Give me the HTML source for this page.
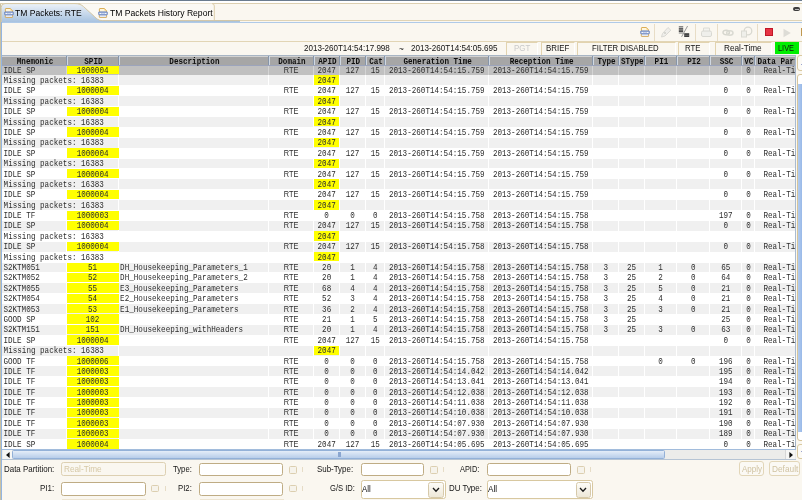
<!DOCTYPE html><html><head><meta charset="utf-8"><style>
*{margin:0;padding:0;box-sizing:border-box}
html,body{width:802px;height:500px;overflow:hidden;background:#faf7f0}
body{filter:blur(0.35px)}
body{position:relative;font-family:"Liberation Sans",sans-serif;color:#222}
.a{position:absolute}
.t{position:absolute;white-space:nowrap;transform-origin:0 0}
.ht{position:absolute;top:0;height:10px;font:bold 7.6px/13px "Liberation Mono",monospace;color:#0e0e0e;text-align:center;white-space:nowrap;transform:scaleY(1.08);transform-origin:0 8.6px}
.r{position:absolute;left:0;width:802px}
.c{position:absolute;top:0;height:10.39px;font:7.6px/13.4px "Liberation Mono",monospace;color:#2c2c2c;white-space:nowrap;clip-path:inset(-4px 0 -4px 0);transform:scaleY(1.13);transform-origin:0 8px}
.s{font-family:"Liberation Sans",sans-serif}
.vc{margin-left:0.6px}
.fld{position:absolute;border:1px solid #bfac84;border-radius:2.5px;background:#fff}
.chk{position:absolute;width:8px;height:7.5px;border:1px solid #dccfb0;border-radius:1.5px;background:#f6f3eb}
.ex{position:absolute;width:1px;height:5px;background:#e6dcc6}
</style></head><body>

<div class="a" style="left:0;top:0;width:802px;height:1px;background:#6a7b8e"></div>
<div class="a" style="left:0;top:1px;width:802px;height:2px;background:#fff"></div>
<div class="a" style="left:0;top:3px;width:802px;height:1px;background:#dccfb0"></div>
<div class="a" style="left:0;top:20.3px;width:802px;height:1px;background:#e0d3b4"></div>
<svg class="a" style="left:0;top:0" width="240" height="24" viewBox="0 0 240 24">
<defs><linearGradient id="tg" x1="0" y1="0" x2="0" y2="1"><stop offset="0" stop-color="#edf2f8"/><stop offset="1" stop-color="#a5c1df"/></linearGradient></defs>
<path d="M80,3.6 L212,3.6 Q214.3,3.6 214.3,6 L214.3,20.6 L100,20.6 Z" fill="#fbf9f4"/>
<path d="M214.3,20.6 L214.3,6 Q214.3,3.6 212,3.6" fill="none" stroke="#d8c8a2" stroke-width="0.9"/>
<path d="M1.2,22.6 L1.2,7.5 Q1.2,3.6 5,3.6 L75,3.6 C79,3.6 81.5,4.8 83.5,6.6 L94.5,16.6 C96.5,18.6 98.5,20.6 102.5,20.6 L240,20.6 L240,22.6 Z" fill="url(#tg)"/>
<path d="M1.2,22.6 L1.2,7.5 Q1.2,3.6 5,3.6 L75,3.6 C79,3.6 81.5,4.8 83.5,6.6 L94.5,16.6 C96.5,18.6 98.5,20.6 102.5,20.6 L240,20.6" fill="none" stroke="#d4c49e" stroke-width="0.9"/>
</svg>
<div class="a" style="left:0;top:21.5px;width:802px;height:1.1px;background:#afcae8"></div>
<div class="a" style="left:0;top:4px;width:1px;height:496px;background:#c9c1a3"></div>
<div class="a" style="left:1px;top:21.5px;width:1.4px;height:479px;background:#93b5e2"></div>
<svg class="a" style="left:3.6px;top:7.5px" width="10" height="10" viewBox="0 0 10 10">
<path d="M1.4,4 L1.4,1.1 Q1.4,0.5 2,0.5 L6.3,0.5 L8.6,2.7 L8.6,4" fill="#fff6dc" stroke="#d6a648" stroke-width="0.9"/>
<path d="M6.2,0.6 L6.6,2.6 L8.5,2.8" fill="#f2c870" stroke="none"/>
<path d="M1.3,6.8 L1.3,9.1 Q1.3,9.5 1.8,9.5 L8.2,9.5 Q8.6,9.5 8.6,9.1 L8.6,6.8" fill="#e6ebf4" stroke="#d2a24c" stroke-width="0.8"/>
<rect x="0.45" y="3.8" width="9.1" height="3.2" rx="1.2" fill="#97abd6" stroke="#5a76b6" stroke-width="0.6"/>
<rect x="1.5" y="5" width="1.8" height="0.9" fill="#fff"/><rect x="6.7" y="5" width="1.8" height="0.9" fill="#fff"/><rect x="3.6" y="5.1" width="2.8" height="0.7" fill="#dfe7f6"/>
</svg>
<svg class="a" style="left:98px;top:7.5px" width="10" height="10" viewBox="0 0 10 10">
<path d="M1.4,4 L1.4,1.1 Q1.4,0.5 2,0.5 L6.3,0.5 L8.6,2.7 L8.6,4" fill="#fff6dc" stroke="#d6a648" stroke-width="0.9"/>
<path d="M6.2,0.6 L6.6,2.6 L8.5,2.8" fill="#f2c870" stroke="none"/>
<path d="M1.3,6.8 L1.3,9.1 Q1.3,9.5 1.8,9.5 L8.2,9.5 Q8.6,9.5 8.6,9.1 L8.6,6.8" fill="#e6ebf4" stroke="#d2a24c" stroke-width="0.8"/>
<rect x="0.45" y="3.8" width="9.1" height="3.2" rx="1.2" fill="#97abd6" stroke="#5a76b6" stroke-width="0.6"/>
<rect x="1.5" y="5" width="1.8" height="0.9" fill="#fff"/><rect x="6.7" y="5" width="1.8" height="0.9" fill="#fff"/><rect x="3.6" y="5.1" width="2.8" height="0.7" fill="#dfe7f6"/>
</svg>
<div class="a" style="left:792.8px;top:7.2px;width:7.6px;height:3.8px;border-radius:2px;background:#3e3e3e"></div>
<div class="a" style="left:794.6px;top:8.7px;width:4px;height:0.9px;background:#bbb"></div>
<div class="a" style="left:2px;top:40.8px;width:800px;height:1px;background:#e2d5b5"></div>
<svg class="a" style="left:639.8px;top:27px" width="10" height="10" viewBox="0 0 10 10">
<path d="M1.4,4 L1.4,1.1 Q1.4,0.5 2,0.5 L6.3,0.5 L8.6,2.7 L8.6,4" fill="#fff6dc" stroke="#d6a648" stroke-width="0.9"/>
<path d="M6.2,0.6 L6.6,2.6 L8.5,2.8" fill="#f2c870" stroke="none"/>
<path d="M1.3,6.8 L1.3,9.1 Q1.3,9.5 1.8,9.5 L8.2,9.5 Q8.6,9.5 8.6,9.1 L8.6,6.8" fill="#e6ebf4" stroke="#d2a24c" stroke-width="0.8"/>
<rect x="0.45" y="3.8" width="9.1" height="3.2" rx="1.2" fill="#97abd6" stroke="#5a76b6" stroke-width="0.6"/>
<rect x="1.5" y="5" width="1.8" height="0.9" fill="#fff"/><rect x="6.7" y="5" width="1.8" height="0.9" fill="#fff"/><rect x="3.6" y="5.1" width="2.8" height="0.7" fill="#dfe7f6"/>
</svg>
<div class="a" style="left:654px;top:23.5px;width:1px;height:17px;background:#e8ddc6"></div>
<div class="a" style="left:694.5px;top:23.5px;width:1px;height:17px;background:#e8ddc6"></div>
<div class="a" style="left:716.5px;top:23.5px;width:1px;height:17px;background:#e8ddc6"></div>
<div class="a" style="left:756.5px;top:23.5px;width:1px;height:17px;background:#e8ddc6"></div>
<svg class="a" style="left:660px;top:26px" width="12" height="12" viewBox="0 0 12 12"><path d="M1.5,11 L2.5,7.5 L8,1.5 L10.8,4.2 L5,10 Z" fill="#efeeea" stroke="#d6d6d0" stroke-width="0.9"/><circle cx="5" cy="7" r="1.1" fill="#d2d2cc"/></svg>
<svg class="a" style="left:678px;top:25px" width="13" height="13" viewBox="0 0 13 13"><rect x="0.8" y="1" width="4.4" height="1.6" fill="#8a8a8a"/><rect x="0.8" y="3" width="4.4" height="1.8" fill="#606060"/><rect x="0.8" y="5.2" width="4.4" height="1.8" fill="#4a4a4a"/><rect x="0.8" y="7.4" width="4.4" height="1.2" fill="#909090"/><path d="M9.6,1 L3.6,11.8" stroke="#8c8c8c" stroke-width="0.9"/><rect x="6.2" y="8.2" width="5" height="3.8" fill="#3e3e3e"/><rect x="6.2" y="9.9" width="5" height="0.5" fill="#888"/></svg>
<svg class="a" style="left:701px;top:27px" width="11" height="11" viewBox="0 0 11 11"><path d="M2.5,4 L2.5,1 L8.5,1 L8.5,4" fill="#f3f3ef" stroke="#dcdcd6"/><rect x="0.5" y="4" width="10" height="5.5" rx="1.5" fill="#efefeb" stroke="#d8d8d2"/></svg>
<svg class="a" style="left:722px;top:27px" width="12" height="11" viewBox="0 0 12 11"><ellipse cx="4.2" cy="5.5" rx="3.2" ry="2.2" fill="none" stroke="#d6d6ce" stroke-width="1.5"/><ellipse cx="7.8" cy="6" rx="3.2" ry="2.2" fill="none" stroke="#dadad2" stroke-width="1.5"/></svg>
<svg class="a" style="left:741px;top:26px" width="12" height="12" viewBox="0 0 12 12"><circle cx="7" cy="5" r="3.8" fill="none" stroke="#d8d8d0" stroke-width="1.3"/><rect x="0.5" y="5" width="5" height="6" fill="#efefea" stroke="#dadad2"/></svg>
<div class="a" style="left:765px;top:28px;width:7.5px;height:7.5px;background:#e63444;border:0.7px solid #c01828"></div>
<svg class="a" style="left:781.5px;top:27.5px" width="10" height="10" viewBox="0 0 10 10"><path d="M1.5,0.8 L8.8,5 L1.5,9.2 Z" fill="#dddcd6"/></svg>
<div class="a" style="left:800.5px;top:28px;width:2px;height:8px;background:#c09850"></div>
<div class="a" style="left:505.5px;top:42px;width:32px;height:12.5px;border-left:1px solid #e2d3af;border-top:1px solid #e2d3af;border-right:1px solid #ffffff;"></div>
<div class="a" style="left:541px;top:42px;width:33.5px;height:12.5px;border-left:1px solid #e2d3af;border-top:1px solid #e2d3af;border-right:1px solid #ffffff;"></div>
<div class="a" style="left:577px;top:42px;width:98.5px;height:12.5px;border-left:1px solid #e2d3af;border-top:1px solid #e2d3af;border-right:1px solid #ffffff;"></div>
<div class="a" style="left:678px;top:42px;width:31.5px;height:12.5px;border-left:1px solid #e2d3af;border-top:1px solid #e2d3af;border-right:1px solid #ffffff;"></div>
<div class="a" style="left:714.5px;top:42px;width:57px;height:12.5px;border-left:1px solid #e2d3af;border-top:1px solid #e2d3af;border-right:1px solid #ffffff;"></div>
<div class="a" style="left:775.2px;top:42.2px;width:23.5px;height:12.3px;background:#00ee00"></div>
<div class="a" style="left:2px;top:55px;width:794px;height:395px;background:#fff"></div>
<div class="a" style="left:2px;top:55px;width:794px;height:1px;background:#a8b5c4"></div>
<div class="a" style="left:795.2px;top:55px;width:1px;height:395px;background:#a9bbd0"></div>
<div class="a" style="left:2px;top:56px;width:793.2px;height:1px;background:#d2d2d2"></div>
<div class="a" style="left:2px;top:57px;width:793.2px;height:7.6px;background:#a6a6a6"></div>
<div class="r" style="top:64.60px;height:10.39px"><div class="a" style="left:2px;top:0.5px;width:793.2px;height:9.89px;background:#c0c0c0"></div><div class="a" style="left:66.00px;top:0;width:1px;height:100%;background:#d4d4d4"></div><div class="a" style="left:118.20px;top:0;width:1px;height:100%;background:#d4d4d4"></div><div class="a" style="left:268.00px;top:0;width:1px;height:100%;background:#d4d4d4"></div><div class="a" style="left:313.30px;top:0;width:1px;height:100%;background:#d4d4d4"></div><div class="a" style="left:339.00px;top:0;width:1px;height:100%;background:#d4d4d4"></div><div class="a" style="left:365.10px;top:0;width:1px;height:100%;background:#d4d4d4"></div><div class="a" style="left:384.40px;top:0;width:1px;height:100%;background:#d4d4d4"></div><div class="a" style="left:488.20px;top:0;width:1px;height:100%;background:#d4d4d4"></div><div class="a" style="left:592.30px;top:0;width:1px;height:100%;background:#d4d4d4"></div><div class="a" style="left:618.10px;top:0;width:1px;height:100%;background:#d4d4d4"></div><div class="a" style="left:643.90px;top:0;width:1px;height:100%;background:#d4d4d4"></div><div class="a" style="left:676.40px;top:0;width:1px;height:100%;background:#d4d4d4"></div><div class="a" style="left:709.20px;top:0;width:1px;height:100%;background:#d4d4d4"></div><div class="a" style="left:741.40px;top:0;width:1px;height:100%;background:#d4d4d4"></div><div class="a" style="left:753.70px;top:0;width:1px;height:100%;background:#d4d4d4"></div><div class="a" style="left:67.00px;top:0.5px;width:52.20px;height:9.39px;background:#ffff00"></div><div class="c " style="left:3.40px;width:62.60px;text-align:left">IDLE SP</div><div class="c " style="left:67.00px;width:51.20px;text-align:center">1000004</div><div class="c " style="left:120.10px;width:147.90px;text-align:left"></div><div class="c s" style="left:269.00px;width:44.30px;text-align:center;font-size:8.4px;line-height:11.6px;transform:scaleX(0.88);transform-origin:50% 50%">RTE</div><div class="c " style="left:314.30px;width:24.70px;text-align:center">2047</div><div class="c " style="left:340.00px;width:25.10px;text-align:center">127</div><div class="c " style="left:366.10px;width:18.30px;text-align:center">15</div><div class="c " style="left:385.40px;width:102.80px;text-align:center">2013-260T14:54:15.759</div><div class="c " style="left:489.20px;width:103.10px;text-align:center">2013-260T14:54:15.759</div><div class="c " style="left:593.30px;width:24.80px;text-align:center"></div><div class="c " style="left:619.10px;width:24.80px;text-align:center"></div><div class="c " style="left:644.90px;width:31.50px;text-align:center"></div><div class="c " style="left:677.40px;width:31.80px;text-align:center"></div><div class="c " style="left:710.20px;width:31.20px;text-align:center">0</div><div class="c vc" style="left:742.40px;width:11.30px;text-align:center">0</div><div class="c" style="left:763.4px;width:31.8px">Real-Time</div></div>
<div class="r" style="top:74.99px;height:10.39px"><div class="a" style="left:2px;top:0.5px;width:793.2px;height:9.89px;background:#f0f0f0"></div><div class="a" style="left:118.20px;top:0;width:1px;height:100%;background:#ffffff"></div><div class="a" style="left:268.00px;top:0;width:1px;height:100%;background:#ffffff"></div><div class="a" style="left:313.30px;top:0;width:1px;height:100%;background:#ffffff"></div><div class="a" style="left:339.00px;top:0;width:1px;height:100%;background:#ffffff"></div><div class="a" style="left:365.10px;top:0;width:1px;height:100%;background:#ffffff"></div><div class="a" style="left:384.40px;top:0;width:1px;height:100%;background:#ffffff"></div><div class="a" style="left:488.20px;top:0;width:1px;height:100%;background:#ffffff"></div><div class="a" style="left:592.30px;top:0;width:1px;height:100%;background:#ffffff"></div><div class="a" style="left:618.10px;top:0;width:1px;height:100%;background:#ffffff"></div><div class="a" style="left:643.90px;top:0;width:1px;height:100%;background:#ffffff"></div><div class="a" style="left:676.40px;top:0;width:1px;height:100%;background:#ffffff"></div><div class="a" style="left:709.20px;top:0;width:1px;height:100%;background:#ffffff"></div><div class="a" style="left:741.40px;top:0;width:1px;height:100%;background:#ffffff"></div><div class="a" style="left:753.70px;top:0;width:1px;height:100%;background:#ffffff"></div><div class="c" style="left:3.6px;width:200px">Missing packets: 16383</div><div class="a" style="left:314.30px;top:0.5px;width:24.70px;height:9.39px;background:#ffff00"></div><div class="c " style="left:314.30px;width:24.70px;text-align:center">2047</div></div>
<div class="r" style="top:85.38px;height:10.39px"><div class="a" style="left:67.00px;top:0.5px;width:52.20px;height:9.39px;background:#ffff00"></div><div class="c " style="left:3.40px;width:62.60px;text-align:left">IDLE SP</div><div class="c " style="left:67.00px;width:51.20px;text-align:center">1000004</div><div class="c " style="left:120.10px;width:147.90px;text-align:left"></div><div class="c s" style="left:269.00px;width:44.30px;text-align:center;font-size:8.4px;line-height:11.6px;transform:scaleX(0.88);transform-origin:50% 50%">RTE</div><div class="c " style="left:314.30px;width:24.70px;text-align:center">2047</div><div class="c " style="left:340.00px;width:25.10px;text-align:center">127</div><div class="c " style="left:366.10px;width:18.30px;text-align:center">15</div><div class="c " style="left:385.40px;width:102.80px;text-align:center">2013-260T14:54:15.759</div><div class="c " style="left:489.20px;width:103.10px;text-align:center">2013-260T14:54:15.759</div><div class="c " style="left:593.30px;width:24.80px;text-align:center"></div><div class="c " style="left:619.10px;width:24.80px;text-align:center"></div><div class="c " style="left:644.90px;width:31.50px;text-align:center"></div><div class="c " style="left:677.40px;width:31.80px;text-align:center"></div><div class="c " style="left:710.20px;width:31.20px;text-align:center">0</div><div class="c vc" style="left:742.40px;width:11.30px;text-align:center">0</div><div class="c" style="left:763.4px;width:31.8px">Real-Time</div></div>
<div class="r" style="top:95.77px;height:10.39px"><div class="a" style="left:2px;top:0.5px;width:793.2px;height:9.89px;background:#f0f0f0"></div><div class="a" style="left:118.20px;top:0;width:1px;height:100%;background:#ffffff"></div><div class="a" style="left:268.00px;top:0;width:1px;height:100%;background:#ffffff"></div><div class="a" style="left:313.30px;top:0;width:1px;height:100%;background:#ffffff"></div><div class="a" style="left:339.00px;top:0;width:1px;height:100%;background:#ffffff"></div><div class="a" style="left:365.10px;top:0;width:1px;height:100%;background:#ffffff"></div><div class="a" style="left:384.40px;top:0;width:1px;height:100%;background:#ffffff"></div><div class="a" style="left:488.20px;top:0;width:1px;height:100%;background:#ffffff"></div><div class="a" style="left:592.30px;top:0;width:1px;height:100%;background:#ffffff"></div><div class="a" style="left:618.10px;top:0;width:1px;height:100%;background:#ffffff"></div><div class="a" style="left:643.90px;top:0;width:1px;height:100%;background:#ffffff"></div><div class="a" style="left:676.40px;top:0;width:1px;height:100%;background:#ffffff"></div><div class="a" style="left:709.20px;top:0;width:1px;height:100%;background:#ffffff"></div><div class="a" style="left:741.40px;top:0;width:1px;height:100%;background:#ffffff"></div><div class="a" style="left:753.70px;top:0;width:1px;height:100%;background:#ffffff"></div><div class="c" style="left:3.6px;width:200px">Missing packets: 16383</div><div class="a" style="left:314.30px;top:0.5px;width:24.70px;height:9.39px;background:#ffff00"></div><div class="c " style="left:314.30px;width:24.70px;text-align:center">2047</div></div>
<div class="r" style="top:106.16px;height:10.39px"><div class="a" style="left:67.00px;top:0.5px;width:52.20px;height:9.39px;background:#ffff00"></div><div class="c " style="left:3.40px;width:62.60px;text-align:left">IDLE SP</div><div class="c " style="left:67.00px;width:51.20px;text-align:center">1000004</div><div class="c " style="left:120.10px;width:147.90px;text-align:left"></div><div class="c s" style="left:269.00px;width:44.30px;text-align:center;font-size:8.4px;line-height:11.6px;transform:scaleX(0.88);transform-origin:50% 50%">RTE</div><div class="c " style="left:314.30px;width:24.70px;text-align:center">2047</div><div class="c " style="left:340.00px;width:25.10px;text-align:center">127</div><div class="c " style="left:366.10px;width:18.30px;text-align:center">15</div><div class="c " style="left:385.40px;width:102.80px;text-align:center">2013-260T14:54:15.759</div><div class="c " style="left:489.20px;width:103.10px;text-align:center">2013-260T14:54:15.759</div><div class="c " style="left:593.30px;width:24.80px;text-align:center"></div><div class="c " style="left:619.10px;width:24.80px;text-align:center"></div><div class="c " style="left:644.90px;width:31.50px;text-align:center"></div><div class="c " style="left:677.40px;width:31.80px;text-align:center"></div><div class="c " style="left:710.20px;width:31.20px;text-align:center">0</div><div class="c vc" style="left:742.40px;width:11.30px;text-align:center">0</div><div class="c" style="left:763.4px;width:31.8px">Real-Time</div></div>
<div class="r" style="top:116.55px;height:10.39px"><div class="a" style="left:2px;top:0.5px;width:793.2px;height:9.89px;background:#f0f0f0"></div><div class="a" style="left:118.20px;top:0;width:1px;height:100%;background:#ffffff"></div><div class="a" style="left:268.00px;top:0;width:1px;height:100%;background:#ffffff"></div><div class="a" style="left:313.30px;top:0;width:1px;height:100%;background:#ffffff"></div><div class="a" style="left:339.00px;top:0;width:1px;height:100%;background:#ffffff"></div><div class="a" style="left:365.10px;top:0;width:1px;height:100%;background:#ffffff"></div><div class="a" style="left:384.40px;top:0;width:1px;height:100%;background:#ffffff"></div><div class="a" style="left:488.20px;top:0;width:1px;height:100%;background:#ffffff"></div><div class="a" style="left:592.30px;top:0;width:1px;height:100%;background:#ffffff"></div><div class="a" style="left:618.10px;top:0;width:1px;height:100%;background:#ffffff"></div><div class="a" style="left:643.90px;top:0;width:1px;height:100%;background:#ffffff"></div><div class="a" style="left:676.40px;top:0;width:1px;height:100%;background:#ffffff"></div><div class="a" style="left:709.20px;top:0;width:1px;height:100%;background:#ffffff"></div><div class="a" style="left:741.40px;top:0;width:1px;height:100%;background:#ffffff"></div><div class="a" style="left:753.70px;top:0;width:1px;height:100%;background:#ffffff"></div><div class="c" style="left:3.6px;width:200px">Missing packets: 16383</div><div class="a" style="left:314.30px;top:0.5px;width:24.70px;height:9.39px;background:#ffff00"></div><div class="c " style="left:314.30px;width:24.70px;text-align:center">2047</div></div>
<div class="r" style="top:126.94px;height:10.39px"><div class="a" style="left:67.00px;top:0.5px;width:52.20px;height:9.39px;background:#ffff00"></div><div class="c " style="left:3.40px;width:62.60px;text-align:left">IDLE SP</div><div class="c " style="left:67.00px;width:51.20px;text-align:center">1000004</div><div class="c " style="left:120.10px;width:147.90px;text-align:left"></div><div class="c s" style="left:269.00px;width:44.30px;text-align:center;font-size:8.4px;line-height:11.6px;transform:scaleX(0.88);transform-origin:50% 50%">RTE</div><div class="c " style="left:314.30px;width:24.70px;text-align:center">2047</div><div class="c " style="left:340.00px;width:25.10px;text-align:center">127</div><div class="c " style="left:366.10px;width:18.30px;text-align:center">15</div><div class="c " style="left:385.40px;width:102.80px;text-align:center">2013-260T14:54:15.759</div><div class="c " style="left:489.20px;width:103.10px;text-align:center">2013-260T14:54:15.759</div><div class="c " style="left:593.30px;width:24.80px;text-align:center"></div><div class="c " style="left:619.10px;width:24.80px;text-align:center"></div><div class="c " style="left:644.90px;width:31.50px;text-align:center"></div><div class="c " style="left:677.40px;width:31.80px;text-align:center"></div><div class="c " style="left:710.20px;width:31.20px;text-align:center">0</div><div class="c vc" style="left:742.40px;width:11.30px;text-align:center">0</div><div class="c" style="left:763.4px;width:31.8px">Real-Time</div></div>
<div class="r" style="top:137.33px;height:10.39px"><div class="a" style="left:2px;top:0.5px;width:793.2px;height:9.89px;background:#f0f0f0"></div><div class="a" style="left:118.20px;top:0;width:1px;height:100%;background:#ffffff"></div><div class="a" style="left:268.00px;top:0;width:1px;height:100%;background:#ffffff"></div><div class="a" style="left:313.30px;top:0;width:1px;height:100%;background:#ffffff"></div><div class="a" style="left:339.00px;top:0;width:1px;height:100%;background:#ffffff"></div><div class="a" style="left:365.10px;top:0;width:1px;height:100%;background:#ffffff"></div><div class="a" style="left:384.40px;top:0;width:1px;height:100%;background:#ffffff"></div><div class="a" style="left:488.20px;top:0;width:1px;height:100%;background:#ffffff"></div><div class="a" style="left:592.30px;top:0;width:1px;height:100%;background:#ffffff"></div><div class="a" style="left:618.10px;top:0;width:1px;height:100%;background:#ffffff"></div><div class="a" style="left:643.90px;top:0;width:1px;height:100%;background:#ffffff"></div><div class="a" style="left:676.40px;top:0;width:1px;height:100%;background:#ffffff"></div><div class="a" style="left:709.20px;top:0;width:1px;height:100%;background:#ffffff"></div><div class="a" style="left:741.40px;top:0;width:1px;height:100%;background:#ffffff"></div><div class="a" style="left:753.70px;top:0;width:1px;height:100%;background:#ffffff"></div><div class="c" style="left:3.6px;width:200px">Missing packets: 16383</div><div class="a" style="left:314.30px;top:0.5px;width:24.70px;height:9.39px;background:#ffff00"></div><div class="c " style="left:314.30px;width:24.70px;text-align:center">2047</div></div>
<div class="r" style="top:147.72px;height:10.39px"><div class="a" style="left:67.00px;top:0.5px;width:52.20px;height:9.39px;background:#ffff00"></div><div class="c " style="left:3.40px;width:62.60px;text-align:left">IDLE SP</div><div class="c " style="left:67.00px;width:51.20px;text-align:center">1000004</div><div class="c " style="left:120.10px;width:147.90px;text-align:left"></div><div class="c s" style="left:269.00px;width:44.30px;text-align:center;font-size:8.4px;line-height:11.6px;transform:scaleX(0.88);transform-origin:50% 50%">RTE</div><div class="c " style="left:314.30px;width:24.70px;text-align:center">2047</div><div class="c " style="left:340.00px;width:25.10px;text-align:center">127</div><div class="c " style="left:366.10px;width:18.30px;text-align:center">15</div><div class="c " style="left:385.40px;width:102.80px;text-align:center">2013-260T14:54:15.759</div><div class="c " style="left:489.20px;width:103.10px;text-align:center">2013-260T14:54:15.759</div><div class="c " style="left:593.30px;width:24.80px;text-align:center"></div><div class="c " style="left:619.10px;width:24.80px;text-align:center"></div><div class="c " style="left:644.90px;width:31.50px;text-align:center"></div><div class="c " style="left:677.40px;width:31.80px;text-align:center"></div><div class="c " style="left:710.20px;width:31.20px;text-align:center">0</div><div class="c vc" style="left:742.40px;width:11.30px;text-align:center">0</div><div class="c" style="left:763.4px;width:31.8px">Real-Time</div></div>
<div class="r" style="top:158.11px;height:10.39px"><div class="a" style="left:2px;top:0.5px;width:793.2px;height:9.89px;background:#f0f0f0"></div><div class="a" style="left:118.20px;top:0;width:1px;height:100%;background:#ffffff"></div><div class="a" style="left:268.00px;top:0;width:1px;height:100%;background:#ffffff"></div><div class="a" style="left:313.30px;top:0;width:1px;height:100%;background:#ffffff"></div><div class="a" style="left:339.00px;top:0;width:1px;height:100%;background:#ffffff"></div><div class="a" style="left:365.10px;top:0;width:1px;height:100%;background:#ffffff"></div><div class="a" style="left:384.40px;top:0;width:1px;height:100%;background:#ffffff"></div><div class="a" style="left:488.20px;top:0;width:1px;height:100%;background:#ffffff"></div><div class="a" style="left:592.30px;top:0;width:1px;height:100%;background:#ffffff"></div><div class="a" style="left:618.10px;top:0;width:1px;height:100%;background:#ffffff"></div><div class="a" style="left:643.90px;top:0;width:1px;height:100%;background:#ffffff"></div><div class="a" style="left:676.40px;top:0;width:1px;height:100%;background:#ffffff"></div><div class="a" style="left:709.20px;top:0;width:1px;height:100%;background:#ffffff"></div><div class="a" style="left:741.40px;top:0;width:1px;height:100%;background:#ffffff"></div><div class="a" style="left:753.70px;top:0;width:1px;height:100%;background:#ffffff"></div><div class="c" style="left:3.6px;width:200px">Missing packets: 16383</div><div class="a" style="left:314.30px;top:0.5px;width:24.70px;height:9.39px;background:#ffff00"></div><div class="c " style="left:314.30px;width:24.70px;text-align:center">2047</div></div>
<div class="r" style="top:168.50px;height:10.39px"><div class="a" style="left:67.00px;top:0.5px;width:52.20px;height:9.39px;background:#ffff00"></div><div class="c " style="left:3.40px;width:62.60px;text-align:left">IDLE SP</div><div class="c " style="left:67.00px;width:51.20px;text-align:center">1000004</div><div class="c " style="left:120.10px;width:147.90px;text-align:left"></div><div class="c s" style="left:269.00px;width:44.30px;text-align:center;font-size:8.4px;line-height:11.6px;transform:scaleX(0.88);transform-origin:50% 50%">RTE</div><div class="c " style="left:314.30px;width:24.70px;text-align:center">2047</div><div class="c " style="left:340.00px;width:25.10px;text-align:center">127</div><div class="c " style="left:366.10px;width:18.30px;text-align:center">15</div><div class="c " style="left:385.40px;width:102.80px;text-align:center">2013-260T14:54:15.759</div><div class="c " style="left:489.20px;width:103.10px;text-align:center">2013-260T14:54:15.759</div><div class="c " style="left:593.30px;width:24.80px;text-align:center"></div><div class="c " style="left:619.10px;width:24.80px;text-align:center"></div><div class="c " style="left:644.90px;width:31.50px;text-align:center"></div><div class="c " style="left:677.40px;width:31.80px;text-align:center"></div><div class="c " style="left:710.20px;width:31.20px;text-align:center">0</div><div class="c vc" style="left:742.40px;width:11.30px;text-align:center">0</div><div class="c" style="left:763.4px;width:31.8px">Real-Time</div></div>
<div class="r" style="top:178.89px;height:10.39px"><div class="a" style="left:2px;top:0.5px;width:793.2px;height:9.89px;background:#f0f0f0"></div><div class="a" style="left:118.20px;top:0;width:1px;height:100%;background:#ffffff"></div><div class="a" style="left:268.00px;top:0;width:1px;height:100%;background:#ffffff"></div><div class="a" style="left:313.30px;top:0;width:1px;height:100%;background:#ffffff"></div><div class="a" style="left:339.00px;top:0;width:1px;height:100%;background:#ffffff"></div><div class="a" style="left:365.10px;top:0;width:1px;height:100%;background:#ffffff"></div><div class="a" style="left:384.40px;top:0;width:1px;height:100%;background:#ffffff"></div><div class="a" style="left:488.20px;top:0;width:1px;height:100%;background:#ffffff"></div><div class="a" style="left:592.30px;top:0;width:1px;height:100%;background:#ffffff"></div><div class="a" style="left:618.10px;top:0;width:1px;height:100%;background:#ffffff"></div><div class="a" style="left:643.90px;top:0;width:1px;height:100%;background:#ffffff"></div><div class="a" style="left:676.40px;top:0;width:1px;height:100%;background:#ffffff"></div><div class="a" style="left:709.20px;top:0;width:1px;height:100%;background:#ffffff"></div><div class="a" style="left:741.40px;top:0;width:1px;height:100%;background:#ffffff"></div><div class="a" style="left:753.70px;top:0;width:1px;height:100%;background:#ffffff"></div><div class="c" style="left:3.6px;width:200px">Missing packets: 16383</div><div class="a" style="left:314.30px;top:0.5px;width:24.70px;height:9.39px;background:#ffff00"></div><div class="c " style="left:314.30px;width:24.70px;text-align:center">2047</div></div>
<div class="r" style="top:189.28px;height:10.39px"><div class="a" style="left:67.00px;top:0.5px;width:52.20px;height:9.39px;background:#ffff00"></div><div class="c " style="left:3.40px;width:62.60px;text-align:left">IDLE SP</div><div class="c " style="left:67.00px;width:51.20px;text-align:center">1000004</div><div class="c " style="left:120.10px;width:147.90px;text-align:left"></div><div class="c s" style="left:269.00px;width:44.30px;text-align:center;font-size:8.4px;line-height:11.6px;transform:scaleX(0.88);transform-origin:50% 50%">RTE</div><div class="c " style="left:314.30px;width:24.70px;text-align:center">2047</div><div class="c " style="left:340.00px;width:25.10px;text-align:center">127</div><div class="c " style="left:366.10px;width:18.30px;text-align:center">15</div><div class="c " style="left:385.40px;width:102.80px;text-align:center">2013-260T14:54:15.759</div><div class="c " style="left:489.20px;width:103.10px;text-align:center">2013-260T14:54:15.759</div><div class="c " style="left:593.30px;width:24.80px;text-align:center"></div><div class="c " style="left:619.10px;width:24.80px;text-align:center"></div><div class="c " style="left:644.90px;width:31.50px;text-align:center"></div><div class="c " style="left:677.40px;width:31.80px;text-align:center"></div><div class="c " style="left:710.20px;width:31.20px;text-align:center">0</div><div class="c vc" style="left:742.40px;width:11.30px;text-align:center">0</div><div class="c" style="left:763.4px;width:31.8px">Real-Time</div></div>
<div class="r" style="top:199.67px;height:10.39px"><div class="a" style="left:2px;top:0.5px;width:793.2px;height:9.89px;background:#f0f0f0"></div><div class="a" style="left:118.20px;top:0;width:1px;height:100%;background:#ffffff"></div><div class="a" style="left:268.00px;top:0;width:1px;height:100%;background:#ffffff"></div><div class="a" style="left:313.30px;top:0;width:1px;height:100%;background:#ffffff"></div><div class="a" style="left:339.00px;top:0;width:1px;height:100%;background:#ffffff"></div><div class="a" style="left:365.10px;top:0;width:1px;height:100%;background:#ffffff"></div><div class="a" style="left:384.40px;top:0;width:1px;height:100%;background:#ffffff"></div><div class="a" style="left:488.20px;top:0;width:1px;height:100%;background:#ffffff"></div><div class="a" style="left:592.30px;top:0;width:1px;height:100%;background:#ffffff"></div><div class="a" style="left:618.10px;top:0;width:1px;height:100%;background:#ffffff"></div><div class="a" style="left:643.90px;top:0;width:1px;height:100%;background:#ffffff"></div><div class="a" style="left:676.40px;top:0;width:1px;height:100%;background:#ffffff"></div><div class="a" style="left:709.20px;top:0;width:1px;height:100%;background:#ffffff"></div><div class="a" style="left:741.40px;top:0;width:1px;height:100%;background:#ffffff"></div><div class="a" style="left:753.70px;top:0;width:1px;height:100%;background:#ffffff"></div><div class="c" style="left:3.6px;width:200px">Missing packets: 16383</div><div class="a" style="left:314.30px;top:0.5px;width:24.70px;height:9.39px;background:#ffff00"></div><div class="c " style="left:314.30px;width:24.70px;text-align:center">2047</div></div>
<div class="r" style="top:210.06px;height:10.39px"><div class="a" style="left:67.00px;top:0.5px;width:52.20px;height:9.39px;background:#ffff00"></div><div class="c " style="left:3.40px;width:62.60px;text-align:left">IDLE TF</div><div class="c " style="left:67.00px;width:51.20px;text-align:center">1000003</div><div class="c " style="left:120.10px;width:147.90px;text-align:left"></div><div class="c s" style="left:269.00px;width:44.30px;text-align:center;font-size:8.4px;line-height:11.6px;transform:scaleX(0.88);transform-origin:50% 50%">RTE</div><div class="c " style="left:314.30px;width:24.70px;text-align:center">0</div><div class="c " style="left:340.00px;width:25.10px;text-align:center">0</div><div class="c " style="left:366.10px;width:18.30px;text-align:center">0</div><div class="c " style="left:385.40px;width:102.80px;text-align:center">2013-260T14:54:15.758</div><div class="c " style="left:489.20px;width:103.10px;text-align:center">2013-260T14:54:15.758</div><div class="c " style="left:593.30px;width:24.80px;text-align:center"></div><div class="c " style="left:619.10px;width:24.80px;text-align:center"></div><div class="c " style="left:644.90px;width:31.50px;text-align:center"></div><div class="c " style="left:677.40px;width:31.80px;text-align:center"></div><div class="c " style="left:710.20px;width:31.20px;text-align:center">197</div><div class="c vc" style="left:742.40px;width:11.30px;text-align:center">0</div><div class="c" style="left:763.4px;width:31.8px">Real-Time</div></div>
<div class="r" style="top:220.45px;height:10.39px"><div class="a" style="left:2px;top:0.5px;width:793.2px;height:9.89px;background:#f0f0f0"></div><div class="a" style="left:66.00px;top:0;width:1px;height:100%;background:#ffffff"></div><div class="a" style="left:118.20px;top:0;width:1px;height:100%;background:#ffffff"></div><div class="a" style="left:268.00px;top:0;width:1px;height:100%;background:#ffffff"></div><div class="a" style="left:313.30px;top:0;width:1px;height:100%;background:#ffffff"></div><div class="a" style="left:339.00px;top:0;width:1px;height:100%;background:#ffffff"></div><div class="a" style="left:365.10px;top:0;width:1px;height:100%;background:#ffffff"></div><div class="a" style="left:384.40px;top:0;width:1px;height:100%;background:#ffffff"></div><div class="a" style="left:488.20px;top:0;width:1px;height:100%;background:#ffffff"></div><div class="a" style="left:592.30px;top:0;width:1px;height:100%;background:#ffffff"></div><div class="a" style="left:618.10px;top:0;width:1px;height:100%;background:#ffffff"></div><div class="a" style="left:643.90px;top:0;width:1px;height:100%;background:#ffffff"></div><div class="a" style="left:676.40px;top:0;width:1px;height:100%;background:#ffffff"></div><div class="a" style="left:709.20px;top:0;width:1px;height:100%;background:#ffffff"></div><div class="a" style="left:741.40px;top:0;width:1px;height:100%;background:#ffffff"></div><div class="a" style="left:753.70px;top:0;width:1px;height:100%;background:#ffffff"></div><div class="a" style="left:67.00px;top:0.5px;width:52.20px;height:9.39px;background:#ffff00"></div><div class="c " style="left:3.40px;width:62.60px;text-align:left">IDLE SP</div><div class="c " style="left:67.00px;width:51.20px;text-align:center">1000004</div><div class="c " style="left:120.10px;width:147.90px;text-align:left"></div><div class="c s" style="left:269.00px;width:44.30px;text-align:center;font-size:8.4px;line-height:11.6px;transform:scaleX(0.88);transform-origin:50% 50%">RTE</div><div class="c " style="left:314.30px;width:24.70px;text-align:center">2047</div><div class="c " style="left:340.00px;width:25.10px;text-align:center">127</div><div class="c " style="left:366.10px;width:18.30px;text-align:center">15</div><div class="c " style="left:385.40px;width:102.80px;text-align:center">2013-260T14:54:15.758</div><div class="c " style="left:489.20px;width:103.10px;text-align:center">2013-260T14:54:15.758</div><div class="c " style="left:593.30px;width:24.80px;text-align:center"></div><div class="c " style="left:619.10px;width:24.80px;text-align:center"></div><div class="c " style="left:644.90px;width:31.50px;text-align:center"></div><div class="c " style="left:677.40px;width:31.80px;text-align:center"></div><div class="c " style="left:710.20px;width:31.20px;text-align:center">0</div><div class="c vc" style="left:742.40px;width:11.30px;text-align:center">0</div><div class="c" style="left:763.4px;width:31.8px">Real-Time</div></div>
<div class="r" style="top:230.84px;height:10.39px"><div class="c" style="left:3.6px;width:200px">Missing packets: 16383</div><div class="a" style="left:314.30px;top:0.5px;width:24.70px;height:9.39px;background:#ffff00"></div><div class="c " style="left:314.30px;width:24.70px;text-align:center">2047</div></div>
<div class="r" style="top:241.23px;height:10.39px"><div class="a" style="left:2px;top:0.5px;width:793.2px;height:9.89px;background:#f0f0f0"></div><div class="a" style="left:66.00px;top:0;width:1px;height:100%;background:#ffffff"></div><div class="a" style="left:118.20px;top:0;width:1px;height:100%;background:#ffffff"></div><div class="a" style="left:268.00px;top:0;width:1px;height:100%;background:#ffffff"></div><div class="a" style="left:313.30px;top:0;width:1px;height:100%;background:#ffffff"></div><div class="a" style="left:339.00px;top:0;width:1px;height:100%;background:#ffffff"></div><div class="a" style="left:365.10px;top:0;width:1px;height:100%;background:#ffffff"></div><div class="a" style="left:384.40px;top:0;width:1px;height:100%;background:#ffffff"></div><div class="a" style="left:488.20px;top:0;width:1px;height:100%;background:#ffffff"></div><div class="a" style="left:592.30px;top:0;width:1px;height:100%;background:#ffffff"></div><div class="a" style="left:618.10px;top:0;width:1px;height:100%;background:#ffffff"></div><div class="a" style="left:643.90px;top:0;width:1px;height:100%;background:#ffffff"></div><div class="a" style="left:676.40px;top:0;width:1px;height:100%;background:#ffffff"></div><div class="a" style="left:709.20px;top:0;width:1px;height:100%;background:#ffffff"></div><div class="a" style="left:741.40px;top:0;width:1px;height:100%;background:#ffffff"></div><div class="a" style="left:753.70px;top:0;width:1px;height:100%;background:#ffffff"></div><div class="a" style="left:67.00px;top:0.5px;width:52.20px;height:9.39px;background:#ffff00"></div><div class="c " style="left:3.40px;width:62.60px;text-align:left">IDLE SP</div><div class="c " style="left:67.00px;width:51.20px;text-align:center">1000004</div><div class="c " style="left:120.10px;width:147.90px;text-align:left"></div><div class="c s" style="left:269.00px;width:44.30px;text-align:center;font-size:8.4px;line-height:11.6px;transform:scaleX(0.88);transform-origin:50% 50%">RTE</div><div class="c " style="left:314.30px;width:24.70px;text-align:center">2047</div><div class="c " style="left:340.00px;width:25.10px;text-align:center">127</div><div class="c " style="left:366.10px;width:18.30px;text-align:center">15</div><div class="c " style="left:385.40px;width:102.80px;text-align:center">2013-260T14:54:15.758</div><div class="c " style="left:489.20px;width:103.10px;text-align:center">2013-260T14:54:15.758</div><div class="c " style="left:593.30px;width:24.80px;text-align:center"></div><div class="c " style="left:619.10px;width:24.80px;text-align:center"></div><div class="c " style="left:644.90px;width:31.50px;text-align:center"></div><div class="c " style="left:677.40px;width:31.80px;text-align:center"></div><div class="c " style="left:710.20px;width:31.20px;text-align:center">0</div><div class="c vc" style="left:742.40px;width:11.30px;text-align:center">0</div><div class="c" style="left:763.4px;width:31.8px">Real-Time</div></div>
<div class="r" style="top:251.62px;height:10.39px"><div class="c" style="left:3.6px;width:200px">Missing packets: 16383</div><div class="a" style="left:314.30px;top:0.5px;width:24.70px;height:9.39px;background:#ffff00"></div><div class="c " style="left:314.30px;width:24.70px;text-align:center">2047</div></div>
<div class="r" style="top:262.01px;height:10.39px"><div class="a" style="left:2px;top:0.5px;width:793.2px;height:9.89px;background:#f0f0f0"></div><div class="a" style="left:66.00px;top:0;width:1px;height:100%;background:#ffffff"></div><div class="a" style="left:118.20px;top:0;width:1px;height:100%;background:#ffffff"></div><div class="a" style="left:268.00px;top:0;width:1px;height:100%;background:#ffffff"></div><div class="a" style="left:313.30px;top:0;width:1px;height:100%;background:#ffffff"></div><div class="a" style="left:339.00px;top:0;width:1px;height:100%;background:#ffffff"></div><div class="a" style="left:365.10px;top:0;width:1px;height:100%;background:#ffffff"></div><div class="a" style="left:384.40px;top:0;width:1px;height:100%;background:#ffffff"></div><div class="a" style="left:488.20px;top:0;width:1px;height:100%;background:#ffffff"></div><div class="a" style="left:592.30px;top:0;width:1px;height:100%;background:#ffffff"></div><div class="a" style="left:618.10px;top:0;width:1px;height:100%;background:#ffffff"></div><div class="a" style="left:643.90px;top:0;width:1px;height:100%;background:#ffffff"></div><div class="a" style="left:676.40px;top:0;width:1px;height:100%;background:#ffffff"></div><div class="a" style="left:709.20px;top:0;width:1px;height:100%;background:#ffffff"></div><div class="a" style="left:741.40px;top:0;width:1px;height:100%;background:#ffffff"></div><div class="a" style="left:753.70px;top:0;width:1px;height:100%;background:#ffffff"></div><div class="a" style="left:67.00px;top:0.5px;width:52.20px;height:9.39px;background:#ffff00"></div><div class="c " style="left:3.40px;width:62.60px;text-align:left">S2KTM051</div><div class="c " style="left:67.00px;width:51.20px;text-align:center">51</div><div class="c " style="left:120.10px;width:147.90px;text-align:left">DH_Housekeeping_Parameters_1</div><div class="c s" style="left:269.00px;width:44.30px;text-align:center;font-size:8.4px;line-height:11.6px;transform:scaleX(0.88);transform-origin:50% 50%">RTE</div><div class="c " style="left:314.30px;width:24.70px;text-align:center">20</div><div class="c " style="left:340.00px;width:25.10px;text-align:center">1</div><div class="c " style="left:366.10px;width:18.30px;text-align:center">4</div><div class="c " style="left:385.40px;width:102.80px;text-align:center">2013-260T14:54:15.758</div><div class="c " style="left:489.20px;width:103.10px;text-align:center">2013-260T14:54:15.758</div><div class="c " style="left:593.30px;width:24.80px;text-align:center">3</div><div class="c " style="left:619.10px;width:24.80px;text-align:center">25</div><div class="c " style="left:644.90px;width:31.50px;text-align:center">1</div><div class="c " style="left:677.40px;width:31.80px;text-align:center">0</div><div class="c " style="left:710.20px;width:31.20px;text-align:center">65</div><div class="c vc" style="left:742.40px;width:11.30px;text-align:center">0</div><div class="c" style="left:763.4px;width:31.8px">Real-Time</div></div>
<div class="r" style="top:272.40px;height:10.39px"><div class="a" style="left:67.00px;top:0.5px;width:52.20px;height:9.39px;background:#ffff00"></div><div class="c " style="left:3.40px;width:62.60px;text-align:left">S2KTM052</div><div class="c " style="left:67.00px;width:51.20px;text-align:center">52</div><div class="c " style="left:120.10px;width:147.90px;text-align:left">DH_Housekeeping_Parameters_2</div><div class="c s" style="left:269.00px;width:44.30px;text-align:center;font-size:8.4px;line-height:11.6px;transform:scaleX(0.88);transform-origin:50% 50%">RTE</div><div class="c " style="left:314.30px;width:24.70px;text-align:center">20</div><div class="c " style="left:340.00px;width:25.10px;text-align:center">1</div><div class="c " style="left:366.10px;width:18.30px;text-align:center">4</div><div class="c " style="left:385.40px;width:102.80px;text-align:center">2013-260T14:54:15.758</div><div class="c " style="left:489.20px;width:103.10px;text-align:center">2013-260T14:54:15.758</div><div class="c " style="left:593.30px;width:24.80px;text-align:center">3</div><div class="c " style="left:619.10px;width:24.80px;text-align:center">25</div><div class="c " style="left:644.90px;width:31.50px;text-align:center">2</div><div class="c " style="left:677.40px;width:31.80px;text-align:center">0</div><div class="c " style="left:710.20px;width:31.20px;text-align:center">64</div><div class="c vc" style="left:742.40px;width:11.30px;text-align:center">0</div><div class="c" style="left:763.4px;width:31.8px">Real-Time</div></div>
<div class="r" style="top:282.79px;height:10.39px"><div class="a" style="left:2px;top:0.5px;width:793.2px;height:9.89px;background:#f0f0f0"></div><div class="a" style="left:66.00px;top:0;width:1px;height:100%;background:#ffffff"></div><div class="a" style="left:118.20px;top:0;width:1px;height:100%;background:#ffffff"></div><div class="a" style="left:268.00px;top:0;width:1px;height:100%;background:#ffffff"></div><div class="a" style="left:313.30px;top:0;width:1px;height:100%;background:#ffffff"></div><div class="a" style="left:339.00px;top:0;width:1px;height:100%;background:#ffffff"></div><div class="a" style="left:365.10px;top:0;width:1px;height:100%;background:#ffffff"></div><div class="a" style="left:384.40px;top:0;width:1px;height:100%;background:#ffffff"></div><div class="a" style="left:488.20px;top:0;width:1px;height:100%;background:#ffffff"></div><div class="a" style="left:592.30px;top:0;width:1px;height:100%;background:#ffffff"></div><div class="a" style="left:618.10px;top:0;width:1px;height:100%;background:#ffffff"></div><div class="a" style="left:643.90px;top:0;width:1px;height:100%;background:#ffffff"></div><div class="a" style="left:676.40px;top:0;width:1px;height:100%;background:#ffffff"></div><div class="a" style="left:709.20px;top:0;width:1px;height:100%;background:#ffffff"></div><div class="a" style="left:741.40px;top:0;width:1px;height:100%;background:#ffffff"></div><div class="a" style="left:753.70px;top:0;width:1px;height:100%;background:#ffffff"></div><div class="a" style="left:67.00px;top:0.5px;width:52.20px;height:9.39px;background:#ffff00"></div><div class="c " style="left:3.40px;width:62.60px;text-align:left">S2KTM055</div><div class="c " style="left:67.00px;width:51.20px;text-align:center">55</div><div class="c " style="left:120.10px;width:147.90px;text-align:left">E3_Housekeeping_Parameters</div><div class="c s" style="left:269.00px;width:44.30px;text-align:center;font-size:8.4px;line-height:11.6px;transform:scaleX(0.88);transform-origin:50% 50%">RTE</div><div class="c " style="left:314.30px;width:24.70px;text-align:center">68</div><div class="c " style="left:340.00px;width:25.10px;text-align:center">4</div><div class="c " style="left:366.10px;width:18.30px;text-align:center">4</div><div class="c " style="left:385.40px;width:102.80px;text-align:center">2013-260T14:54:15.758</div><div class="c " style="left:489.20px;width:103.10px;text-align:center">2013-260T14:54:15.758</div><div class="c " style="left:593.30px;width:24.80px;text-align:center">3</div><div class="c " style="left:619.10px;width:24.80px;text-align:center">25</div><div class="c " style="left:644.90px;width:31.50px;text-align:center">5</div><div class="c " style="left:677.40px;width:31.80px;text-align:center">0</div><div class="c " style="left:710.20px;width:31.20px;text-align:center">21</div><div class="c vc" style="left:742.40px;width:11.30px;text-align:center">0</div><div class="c" style="left:763.4px;width:31.8px">Real-Time</div></div>
<div class="r" style="top:293.18px;height:10.39px"><div class="a" style="left:67.00px;top:0.5px;width:52.20px;height:9.39px;background:#ffff00"></div><div class="c " style="left:3.40px;width:62.60px;text-align:left">S2KTM054</div><div class="c " style="left:67.00px;width:51.20px;text-align:center">54</div><div class="c " style="left:120.10px;width:147.90px;text-align:left">E2_Housekeeping_Parameters</div><div class="c s" style="left:269.00px;width:44.30px;text-align:center;font-size:8.4px;line-height:11.6px;transform:scaleX(0.88);transform-origin:50% 50%">RTE</div><div class="c " style="left:314.30px;width:24.70px;text-align:center">52</div><div class="c " style="left:340.00px;width:25.10px;text-align:center">3</div><div class="c " style="left:366.10px;width:18.30px;text-align:center">4</div><div class="c " style="left:385.40px;width:102.80px;text-align:center">2013-260T14:54:15.758</div><div class="c " style="left:489.20px;width:103.10px;text-align:center">2013-260T14:54:15.758</div><div class="c " style="left:593.30px;width:24.80px;text-align:center">3</div><div class="c " style="left:619.10px;width:24.80px;text-align:center">25</div><div class="c " style="left:644.90px;width:31.50px;text-align:center">4</div><div class="c " style="left:677.40px;width:31.80px;text-align:center">0</div><div class="c " style="left:710.20px;width:31.20px;text-align:center">21</div><div class="c vc" style="left:742.40px;width:11.30px;text-align:center">0</div><div class="c" style="left:763.4px;width:31.8px">Real-Time</div></div>
<div class="r" style="top:303.57px;height:10.39px"><div class="a" style="left:2px;top:0.5px;width:793.2px;height:9.89px;background:#f0f0f0"></div><div class="a" style="left:66.00px;top:0;width:1px;height:100%;background:#ffffff"></div><div class="a" style="left:118.20px;top:0;width:1px;height:100%;background:#ffffff"></div><div class="a" style="left:268.00px;top:0;width:1px;height:100%;background:#ffffff"></div><div class="a" style="left:313.30px;top:0;width:1px;height:100%;background:#ffffff"></div><div class="a" style="left:339.00px;top:0;width:1px;height:100%;background:#ffffff"></div><div class="a" style="left:365.10px;top:0;width:1px;height:100%;background:#ffffff"></div><div class="a" style="left:384.40px;top:0;width:1px;height:100%;background:#ffffff"></div><div class="a" style="left:488.20px;top:0;width:1px;height:100%;background:#ffffff"></div><div class="a" style="left:592.30px;top:0;width:1px;height:100%;background:#ffffff"></div><div class="a" style="left:618.10px;top:0;width:1px;height:100%;background:#ffffff"></div><div class="a" style="left:643.90px;top:0;width:1px;height:100%;background:#ffffff"></div><div class="a" style="left:676.40px;top:0;width:1px;height:100%;background:#ffffff"></div><div class="a" style="left:709.20px;top:0;width:1px;height:100%;background:#ffffff"></div><div class="a" style="left:741.40px;top:0;width:1px;height:100%;background:#ffffff"></div><div class="a" style="left:753.70px;top:0;width:1px;height:100%;background:#ffffff"></div><div class="a" style="left:67.00px;top:0.5px;width:52.20px;height:9.39px;background:#ffff00"></div><div class="c " style="left:3.40px;width:62.60px;text-align:left">S2KTM053</div><div class="c " style="left:67.00px;width:51.20px;text-align:center">53</div><div class="c " style="left:120.10px;width:147.90px;text-align:left">E1_Housekeeping_Parameters</div><div class="c s" style="left:269.00px;width:44.30px;text-align:center;font-size:8.4px;line-height:11.6px;transform:scaleX(0.88);transform-origin:50% 50%">RTE</div><div class="c " style="left:314.30px;width:24.70px;text-align:center">36</div><div class="c " style="left:340.00px;width:25.10px;text-align:center">2</div><div class="c " style="left:366.10px;width:18.30px;text-align:center">4</div><div class="c " style="left:385.40px;width:102.80px;text-align:center">2013-260T14:54:15.758</div><div class="c " style="left:489.20px;width:103.10px;text-align:center">2013-260T14:54:15.758</div><div class="c " style="left:593.30px;width:24.80px;text-align:center">3</div><div class="c " style="left:619.10px;width:24.80px;text-align:center">25</div><div class="c " style="left:644.90px;width:31.50px;text-align:center">3</div><div class="c " style="left:677.40px;width:31.80px;text-align:center">0</div><div class="c " style="left:710.20px;width:31.20px;text-align:center">21</div><div class="c vc" style="left:742.40px;width:11.30px;text-align:center">0</div><div class="c" style="left:763.4px;width:31.8px">Real-Time</div></div>
<div class="r" style="top:313.96px;height:10.39px"><div class="a" style="left:67.00px;top:0.5px;width:52.20px;height:9.39px;background:#ffff00"></div><div class="c " style="left:3.40px;width:62.60px;text-align:left">GOOD SP</div><div class="c " style="left:67.00px;width:51.20px;text-align:center">102</div><div class="c " style="left:120.10px;width:147.90px;text-align:left"></div><div class="c s" style="left:269.00px;width:44.30px;text-align:center;font-size:8.4px;line-height:11.6px;transform:scaleX(0.88);transform-origin:50% 50%">RTE</div><div class="c " style="left:314.30px;width:24.70px;text-align:center">21</div><div class="c " style="left:340.00px;width:25.10px;text-align:center">1</div><div class="c " style="left:366.10px;width:18.30px;text-align:center">5</div><div class="c " style="left:385.40px;width:102.80px;text-align:center">2013-260T14:54:15.758</div><div class="c " style="left:489.20px;width:103.10px;text-align:center">2013-260T14:54:15.758</div><div class="c " style="left:593.30px;width:24.80px;text-align:center">3</div><div class="c " style="left:619.10px;width:24.80px;text-align:center">25</div><div class="c " style="left:644.90px;width:31.50px;text-align:center"></div><div class="c " style="left:677.40px;width:31.80px;text-align:center"></div><div class="c " style="left:710.20px;width:31.20px;text-align:center">25</div><div class="c vc" style="left:742.40px;width:11.30px;text-align:center">0</div><div class="c" style="left:763.4px;width:31.8px">Real-Time</div></div>
<div class="r" style="top:324.35px;height:10.39px"><div class="a" style="left:2px;top:0.5px;width:793.2px;height:9.89px;background:#f0f0f0"></div><div class="a" style="left:66.00px;top:0;width:1px;height:100%;background:#ffffff"></div><div class="a" style="left:118.20px;top:0;width:1px;height:100%;background:#ffffff"></div><div class="a" style="left:268.00px;top:0;width:1px;height:100%;background:#ffffff"></div><div class="a" style="left:313.30px;top:0;width:1px;height:100%;background:#ffffff"></div><div class="a" style="left:339.00px;top:0;width:1px;height:100%;background:#ffffff"></div><div class="a" style="left:365.10px;top:0;width:1px;height:100%;background:#ffffff"></div><div class="a" style="left:384.40px;top:0;width:1px;height:100%;background:#ffffff"></div><div class="a" style="left:488.20px;top:0;width:1px;height:100%;background:#ffffff"></div><div class="a" style="left:592.30px;top:0;width:1px;height:100%;background:#ffffff"></div><div class="a" style="left:618.10px;top:0;width:1px;height:100%;background:#ffffff"></div><div class="a" style="left:643.90px;top:0;width:1px;height:100%;background:#ffffff"></div><div class="a" style="left:676.40px;top:0;width:1px;height:100%;background:#ffffff"></div><div class="a" style="left:709.20px;top:0;width:1px;height:100%;background:#ffffff"></div><div class="a" style="left:741.40px;top:0;width:1px;height:100%;background:#ffffff"></div><div class="a" style="left:753.70px;top:0;width:1px;height:100%;background:#ffffff"></div><div class="a" style="left:67.00px;top:0.5px;width:52.20px;height:9.39px;background:#ffff00"></div><div class="c " style="left:3.40px;width:62.60px;text-align:left">S2KTM151</div><div class="c " style="left:67.00px;width:51.20px;text-align:center">151</div><div class="c " style="left:120.10px;width:147.90px;text-align:left">DH_Housekeeping_withHeaders</div><div class="c s" style="left:269.00px;width:44.30px;text-align:center;font-size:8.4px;line-height:11.6px;transform:scaleX(0.88);transform-origin:50% 50%">RTE</div><div class="c " style="left:314.30px;width:24.70px;text-align:center">20</div><div class="c " style="left:340.00px;width:25.10px;text-align:center">1</div><div class="c " style="left:366.10px;width:18.30px;text-align:center">4</div><div class="c " style="left:385.40px;width:102.80px;text-align:center">2013-260T14:54:15.758</div><div class="c " style="left:489.20px;width:103.10px;text-align:center">2013-260T14:54:15.758</div><div class="c " style="left:593.30px;width:24.80px;text-align:center">3</div><div class="c " style="left:619.10px;width:24.80px;text-align:center">25</div><div class="c " style="left:644.90px;width:31.50px;text-align:center">3</div><div class="c " style="left:677.40px;width:31.80px;text-align:center">0</div><div class="c " style="left:710.20px;width:31.20px;text-align:center">63</div><div class="c vc" style="left:742.40px;width:11.30px;text-align:center">0</div><div class="c" style="left:763.4px;width:31.8px">Real-Time</div></div>
<div class="r" style="top:334.74px;height:10.39px"><div class="a" style="left:67.00px;top:0.5px;width:52.20px;height:9.39px;background:#ffff00"></div><div class="c " style="left:3.40px;width:62.60px;text-align:left">IDLE SP</div><div class="c " style="left:67.00px;width:51.20px;text-align:center">1000004</div><div class="c " style="left:120.10px;width:147.90px;text-align:left"></div><div class="c s" style="left:269.00px;width:44.30px;text-align:center;font-size:8.4px;line-height:11.6px;transform:scaleX(0.88);transform-origin:50% 50%">RTE</div><div class="c " style="left:314.30px;width:24.70px;text-align:center">2047</div><div class="c " style="left:340.00px;width:25.10px;text-align:center">127</div><div class="c " style="left:366.10px;width:18.30px;text-align:center">15</div><div class="c " style="left:385.40px;width:102.80px;text-align:center">2013-260T14:54:15.758</div><div class="c " style="left:489.20px;width:103.10px;text-align:center">2013-260T14:54:15.758</div><div class="c " style="left:593.30px;width:24.80px;text-align:center"></div><div class="c " style="left:619.10px;width:24.80px;text-align:center"></div><div class="c " style="left:644.90px;width:31.50px;text-align:center"></div><div class="c " style="left:677.40px;width:31.80px;text-align:center"></div><div class="c " style="left:710.20px;width:31.20px;text-align:center">0</div><div class="c vc" style="left:742.40px;width:11.30px;text-align:center">0</div><div class="c" style="left:763.4px;width:31.8px">Real-Time</div></div>
<div class="r" style="top:345.13px;height:10.39px"><div class="a" style="left:2px;top:0.5px;width:793.2px;height:9.89px;background:#f0f0f0"></div><div class="a" style="left:118.20px;top:0;width:1px;height:100%;background:#ffffff"></div><div class="a" style="left:268.00px;top:0;width:1px;height:100%;background:#ffffff"></div><div class="a" style="left:313.30px;top:0;width:1px;height:100%;background:#ffffff"></div><div class="a" style="left:339.00px;top:0;width:1px;height:100%;background:#ffffff"></div><div class="a" style="left:365.10px;top:0;width:1px;height:100%;background:#ffffff"></div><div class="a" style="left:384.40px;top:0;width:1px;height:100%;background:#ffffff"></div><div class="a" style="left:488.20px;top:0;width:1px;height:100%;background:#ffffff"></div><div class="a" style="left:592.30px;top:0;width:1px;height:100%;background:#ffffff"></div><div class="a" style="left:618.10px;top:0;width:1px;height:100%;background:#ffffff"></div><div class="a" style="left:643.90px;top:0;width:1px;height:100%;background:#ffffff"></div><div class="a" style="left:676.40px;top:0;width:1px;height:100%;background:#ffffff"></div><div class="a" style="left:709.20px;top:0;width:1px;height:100%;background:#ffffff"></div><div class="a" style="left:741.40px;top:0;width:1px;height:100%;background:#ffffff"></div><div class="a" style="left:753.70px;top:0;width:1px;height:100%;background:#ffffff"></div><div class="c" style="left:3.6px;width:200px">Missing packets: 16383</div><div class="a" style="left:314.30px;top:0.5px;width:24.70px;height:9.39px;background:#ffff00"></div><div class="c " style="left:314.30px;width:24.70px;text-align:center">2047</div></div>
<div class="r" style="top:355.52px;height:10.39px"><div class="a" style="left:67.00px;top:0.5px;width:52.20px;height:9.39px;background:#ffff00"></div><div class="c " style="left:3.40px;width:62.60px;text-align:left">GOOD TF</div><div class="c " style="left:67.00px;width:51.20px;text-align:center">1000006</div><div class="c " style="left:120.10px;width:147.90px;text-align:left"></div><div class="c s" style="left:269.00px;width:44.30px;text-align:center;font-size:8.4px;line-height:11.6px;transform:scaleX(0.88);transform-origin:50% 50%">RTE</div><div class="c " style="left:314.30px;width:24.70px;text-align:center">0</div><div class="c " style="left:340.00px;width:25.10px;text-align:center">0</div><div class="c " style="left:366.10px;width:18.30px;text-align:center">0</div><div class="c " style="left:385.40px;width:102.80px;text-align:center">2013-260T14:54:15.758</div><div class="c " style="left:489.20px;width:103.10px;text-align:center">2013-260T14:54:15.758</div><div class="c " style="left:593.30px;width:24.80px;text-align:center"></div><div class="c " style="left:619.10px;width:24.80px;text-align:center"></div><div class="c " style="left:644.90px;width:31.50px;text-align:center">0</div><div class="c " style="left:677.40px;width:31.80px;text-align:center">0</div><div class="c " style="left:710.20px;width:31.20px;text-align:center">196</div><div class="c vc" style="left:742.40px;width:11.30px;text-align:center">0</div><div class="c" style="left:763.4px;width:31.8px">Real-Time</div></div>
<div class="r" style="top:365.91px;height:10.39px"><div class="a" style="left:2px;top:0.5px;width:793.2px;height:9.89px;background:#f0f0f0"></div><div class="a" style="left:66.00px;top:0;width:1px;height:100%;background:#ffffff"></div><div class="a" style="left:118.20px;top:0;width:1px;height:100%;background:#ffffff"></div><div class="a" style="left:268.00px;top:0;width:1px;height:100%;background:#ffffff"></div><div class="a" style="left:313.30px;top:0;width:1px;height:100%;background:#ffffff"></div><div class="a" style="left:339.00px;top:0;width:1px;height:100%;background:#ffffff"></div><div class="a" style="left:365.10px;top:0;width:1px;height:100%;background:#ffffff"></div><div class="a" style="left:384.40px;top:0;width:1px;height:100%;background:#ffffff"></div><div class="a" style="left:488.20px;top:0;width:1px;height:100%;background:#ffffff"></div><div class="a" style="left:592.30px;top:0;width:1px;height:100%;background:#ffffff"></div><div class="a" style="left:618.10px;top:0;width:1px;height:100%;background:#ffffff"></div><div class="a" style="left:643.90px;top:0;width:1px;height:100%;background:#ffffff"></div><div class="a" style="left:676.40px;top:0;width:1px;height:100%;background:#ffffff"></div><div class="a" style="left:709.20px;top:0;width:1px;height:100%;background:#ffffff"></div><div class="a" style="left:741.40px;top:0;width:1px;height:100%;background:#ffffff"></div><div class="a" style="left:753.70px;top:0;width:1px;height:100%;background:#ffffff"></div><div class="a" style="left:67.00px;top:0.5px;width:52.20px;height:9.39px;background:#ffff00"></div><div class="c " style="left:3.40px;width:62.60px;text-align:left">IDLE TF</div><div class="c " style="left:67.00px;width:51.20px;text-align:center">1000003</div><div class="c " style="left:120.10px;width:147.90px;text-align:left"></div><div class="c s" style="left:269.00px;width:44.30px;text-align:center;font-size:8.4px;line-height:11.6px;transform:scaleX(0.88);transform-origin:50% 50%">RTE</div><div class="c " style="left:314.30px;width:24.70px;text-align:center">0</div><div class="c " style="left:340.00px;width:25.10px;text-align:center">0</div><div class="c " style="left:366.10px;width:18.30px;text-align:center">0</div><div class="c " style="left:385.40px;width:102.80px;text-align:center">2013-260T14:54:14.042</div><div class="c " style="left:489.20px;width:103.10px;text-align:center">2013-260T14:54:14.042</div><div class="c " style="left:593.30px;width:24.80px;text-align:center"></div><div class="c " style="left:619.10px;width:24.80px;text-align:center"></div><div class="c " style="left:644.90px;width:31.50px;text-align:center"></div><div class="c " style="left:677.40px;width:31.80px;text-align:center"></div><div class="c " style="left:710.20px;width:31.20px;text-align:center">195</div><div class="c vc" style="left:742.40px;width:11.30px;text-align:center">0</div><div class="c" style="left:763.4px;width:31.8px">Real-Time</div></div>
<div class="r" style="top:376.30px;height:10.39px"><div class="a" style="left:67.00px;top:0.5px;width:52.20px;height:9.39px;background:#ffff00"></div><div class="c " style="left:3.40px;width:62.60px;text-align:left">IDLE TF</div><div class="c " style="left:67.00px;width:51.20px;text-align:center">1000003</div><div class="c " style="left:120.10px;width:147.90px;text-align:left"></div><div class="c s" style="left:269.00px;width:44.30px;text-align:center;font-size:8.4px;line-height:11.6px;transform:scaleX(0.88);transform-origin:50% 50%">RTE</div><div class="c " style="left:314.30px;width:24.70px;text-align:center">0</div><div class="c " style="left:340.00px;width:25.10px;text-align:center">0</div><div class="c " style="left:366.10px;width:18.30px;text-align:center">0</div><div class="c " style="left:385.40px;width:102.80px;text-align:center">2013-260T14:54:13.041</div><div class="c " style="left:489.20px;width:103.10px;text-align:center">2013-260T14:54:13.041</div><div class="c " style="left:593.30px;width:24.80px;text-align:center"></div><div class="c " style="left:619.10px;width:24.80px;text-align:center"></div><div class="c " style="left:644.90px;width:31.50px;text-align:center"></div><div class="c " style="left:677.40px;width:31.80px;text-align:center"></div><div class="c " style="left:710.20px;width:31.20px;text-align:center">194</div><div class="c vc" style="left:742.40px;width:11.30px;text-align:center">0</div><div class="c" style="left:763.4px;width:31.8px">Real-Time</div></div>
<div class="r" style="top:386.69px;height:10.39px"><div class="a" style="left:2px;top:0.5px;width:793.2px;height:9.89px;background:#f0f0f0"></div><div class="a" style="left:66.00px;top:0;width:1px;height:100%;background:#ffffff"></div><div class="a" style="left:118.20px;top:0;width:1px;height:100%;background:#ffffff"></div><div class="a" style="left:268.00px;top:0;width:1px;height:100%;background:#ffffff"></div><div class="a" style="left:313.30px;top:0;width:1px;height:100%;background:#ffffff"></div><div class="a" style="left:339.00px;top:0;width:1px;height:100%;background:#ffffff"></div><div class="a" style="left:365.10px;top:0;width:1px;height:100%;background:#ffffff"></div><div class="a" style="left:384.40px;top:0;width:1px;height:100%;background:#ffffff"></div><div class="a" style="left:488.20px;top:0;width:1px;height:100%;background:#ffffff"></div><div class="a" style="left:592.30px;top:0;width:1px;height:100%;background:#ffffff"></div><div class="a" style="left:618.10px;top:0;width:1px;height:100%;background:#ffffff"></div><div class="a" style="left:643.90px;top:0;width:1px;height:100%;background:#ffffff"></div><div class="a" style="left:676.40px;top:0;width:1px;height:100%;background:#ffffff"></div><div class="a" style="left:709.20px;top:0;width:1px;height:100%;background:#ffffff"></div><div class="a" style="left:741.40px;top:0;width:1px;height:100%;background:#ffffff"></div><div class="a" style="left:753.70px;top:0;width:1px;height:100%;background:#ffffff"></div><div class="a" style="left:67.00px;top:0.5px;width:52.20px;height:9.39px;background:#ffff00"></div><div class="c " style="left:3.40px;width:62.60px;text-align:left">IDLE TF</div><div class="c " style="left:67.00px;width:51.20px;text-align:center">1000003</div><div class="c " style="left:120.10px;width:147.90px;text-align:left"></div><div class="c s" style="left:269.00px;width:44.30px;text-align:center;font-size:8.4px;line-height:11.6px;transform:scaleX(0.88);transform-origin:50% 50%">RTE</div><div class="c " style="left:314.30px;width:24.70px;text-align:center">0</div><div class="c " style="left:340.00px;width:25.10px;text-align:center">0</div><div class="c " style="left:366.10px;width:18.30px;text-align:center">0</div><div class="c " style="left:385.40px;width:102.80px;text-align:center">2013-260T14:54:12.038</div><div class="c " style="left:489.20px;width:103.10px;text-align:center">2013-260T14:54:12.038</div><div class="c " style="left:593.30px;width:24.80px;text-align:center"></div><div class="c " style="left:619.10px;width:24.80px;text-align:center"></div><div class="c " style="left:644.90px;width:31.50px;text-align:center"></div><div class="c " style="left:677.40px;width:31.80px;text-align:center"></div><div class="c " style="left:710.20px;width:31.20px;text-align:center">193</div><div class="c vc" style="left:742.40px;width:11.30px;text-align:center">0</div><div class="c" style="left:763.4px;width:31.8px">Real-Time</div></div>
<div class="r" style="top:397.08px;height:10.39px"><div class="a" style="left:67.00px;top:0.5px;width:52.20px;height:9.39px;background:#ffff00"></div><div class="c " style="left:3.40px;width:62.60px;text-align:left">IDLE TF</div><div class="c " style="left:67.00px;width:51.20px;text-align:center">1000003</div><div class="c " style="left:120.10px;width:147.90px;text-align:left"></div><div class="c s" style="left:269.00px;width:44.30px;text-align:center;font-size:8.4px;line-height:11.6px;transform:scaleX(0.88);transform-origin:50% 50%">RTE</div><div class="c " style="left:314.30px;width:24.70px;text-align:center">0</div><div class="c " style="left:340.00px;width:25.10px;text-align:center">0</div><div class="c " style="left:366.10px;width:18.30px;text-align:center">0</div><div class="c " style="left:385.40px;width:102.80px;text-align:center">2013-260T14:54:11.038</div><div class="c " style="left:489.20px;width:103.10px;text-align:center">2013-260T14:54:11.038</div><div class="c " style="left:593.30px;width:24.80px;text-align:center"></div><div class="c " style="left:619.10px;width:24.80px;text-align:center"></div><div class="c " style="left:644.90px;width:31.50px;text-align:center"></div><div class="c " style="left:677.40px;width:31.80px;text-align:center"></div><div class="c " style="left:710.20px;width:31.20px;text-align:center">192</div><div class="c vc" style="left:742.40px;width:11.30px;text-align:center">0</div><div class="c" style="left:763.4px;width:31.8px">Real-Time</div></div>
<div class="r" style="top:407.47px;height:10.39px"><div class="a" style="left:2px;top:0.5px;width:793.2px;height:9.89px;background:#f0f0f0"></div><div class="a" style="left:66.00px;top:0;width:1px;height:100%;background:#ffffff"></div><div class="a" style="left:118.20px;top:0;width:1px;height:100%;background:#ffffff"></div><div class="a" style="left:268.00px;top:0;width:1px;height:100%;background:#ffffff"></div><div class="a" style="left:313.30px;top:0;width:1px;height:100%;background:#ffffff"></div><div class="a" style="left:339.00px;top:0;width:1px;height:100%;background:#ffffff"></div><div class="a" style="left:365.10px;top:0;width:1px;height:100%;background:#ffffff"></div><div class="a" style="left:384.40px;top:0;width:1px;height:100%;background:#ffffff"></div><div class="a" style="left:488.20px;top:0;width:1px;height:100%;background:#ffffff"></div><div class="a" style="left:592.30px;top:0;width:1px;height:100%;background:#ffffff"></div><div class="a" style="left:618.10px;top:0;width:1px;height:100%;background:#ffffff"></div><div class="a" style="left:643.90px;top:0;width:1px;height:100%;background:#ffffff"></div><div class="a" style="left:676.40px;top:0;width:1px;height:100%;background:#ffffff"></div><div class="a" style="left:709.20px;top:0;width:1px;height:100%;background:#ffffff"></div><div class="a" style="left:741.40px;top:0;width:1px;height:100%;background:#ffffff"></div><div class="a" style="left:753.70px;top:0;width:1px;height:100%;background:#ffffff"></div><div class="a" style="left:67.00px;top:0.5px;width:52.20px;height:9.39px;background:#ffff00"></div><div class="c " style="left:3.40px;width:62.60px;text-align:left">IDLE TF</div><div class="c " style="left:67.00px;width:51.20px;text-align:center">1000003</div><div class="c " style="left:120.10px;width:147.90px;text-align:left"></div><div class="c s" style="left:269.00px;width:44.30px;text-align:center;font-size:8.4px;line-height:11.6px;transform:scaleX(0.88);transform-origin:50% 50%">RTE</div><div class="c " style="left:314.30px;width:24.70px;text-align:center">0</div><div class="c " style="left:340.00px;width:25.10px;text-align:center">0</div><div class="c " style="left:366.10px;width:18.30px;text-align:center">0</div><div class="c " style="left:385.40px;width:102.80px;text-align:center">2013-260T14:54:10.038</div><div class="c " style="left:489.20px;width:103.10px;text-align:center">2013-260T14:54:10.038</div><div class="c " style="left:593.30px;width:24.80px;text-align:center"></div><div class="c " style="left:619.10px;width:24.80px;text-align:center"></div><div class="c " style="left:644.90px;width:31.50px;text-align:center"></div><div class="c " style="left:677.40px;width:31.80px;text-align:center"></div><div class="c " style="left:710.20px;width:31.20px;text-align:center">191</div><div class="c vc" style="left:742.40px;width:11.30px;text-align:center">0</div><div class="c" style="left:763.4px;width:31.8px">Real-Time</div></div>
<div class="r" style="top:417.86px;height:10.39px"><div class="a" style="left:67.00px;top:0.5px;width:52.20px;height:9.39px;background:#ffff00"></div><div class="c " style="left:3.40px;width:62.60px;text-align:left">IDLE TF</div><div class="c " style="left:67.00px;width:51.20px;text-align:center">1000003</div><div class="c " style="left:120.10px;width:147.90px;text-align:left"></div><div class="c s" style="left:269.00px;width:44.30px;text-align:center;font-size:8.4px;line-height:11.6px;transform:scaleX(0.88);transform-origin:50% 50%">RTE</div><div class="c " style="left:314.30px;width:24.70px;text-align:center">0</div><div class="c " style="left:340.00px;width:25.10px;text-align:center">0</div><div class="c " style="left:366.10px;width:18.30px;text-align:center">0</div><div class="c " style="left:385.40px;width:102.80px;text-align:center">2013-260T14:54:07.930</div><div class="c " style="left:489.20px;width:103.10px;text-align:center">2013-260T14:54:07.930</div><div class="c " style="left:593.30px;width:24.80px;text-align:center"></div><div class="c " style="left:619.10px;width:24.80px;text-align:center"></div><div class="c " style="left:644.90px;width:31.50px;text-align:center"></div><div class="c " style="left:677.40px;width:31.80px;text-align:center"></div><div class="c " style="left:710.20px;width:31.20px;text-align:center">190</div><div class="c vc" style="left:742.40px;width:11.30px;text-align:center">0</div><div class="c" style="left:763.4px;width:31.8px">Real-Time</div></div>
<div class="r" style="top:428.25px;height:10.39px"><div class="a" style="left:2px;top:0.5px;width:793.2px;height:9.89px;background:#f0f0f0"></div><div class="a" style="left:66.00px;top:0;width:1px;height:100%;background:#ffffff"></div><div class="a" style="left:118.20px;top:0;width:1px;height:100%;background:#ffffff"></div><div class="a" style="left:268.00px;top:0;width:1px;height:100%;background:#ffffff"></div><div class="a" style="left:313.30px;top:0;width:1px;height:100%;background:#ffffff"></div><div class="a" style="left:339.00px;top:0;width:1px;height:100%;background:#ffffff"></div><div class="a" style="left:365.10px;top:0;width:1px;height:100%;background:#ffffff"></div><div class="a" style="left:384.40px;top:0;width:1px;height:100%;background:#ffffff"></div><div class="a" style="left:488.20px;top:0;width:1px;height:100%;background:#ffffff"></div><div class="a" style="left:592.30px;top:0;width:1px;height:100%;background:#ffffff"></div><div class="a" style="left:618.10px;top:0;width:1px;height:100%;background:#ffffff"></div><div class="a" style="left:643.90px;top:0;width:1px;height:100%;background:#ffffff"></div><div class="a" style="left:676.40px;top:0;width:1px;height:100%;background:#ffffff"></div><div class="a" style="left:709.20px;top:0;width:1px;height:100%;background:#ffffff"></div><div class="a" style="left:741.40px;top:0;width:1px;height:100%;background:#ffffff"></div><div class="a" style="left:753.70px;top:0;width:1px;height:100%;background:#ffffff"></div><div class="a" style="left:67.00px;top:0.5px;width:52.20px;height:9.39px;background:#ffff00"></div><div class="c " style="left:3.40px;width:62.60px;text-align:left">IDLE TF</div><div class="c " style="left:67.00px;width:51.20px;text-align:center">1000003</div><div class="c " style="left:120.10px;width:147.90px;text-align:left"></div><div class="c s" style="left:269.00px;width:44.30px;text-align:center;font-size:8.4px;line-height:11.6px;transform:scaleX(0.88);transform-origin:50% 50%">RTE</div><div class="c " style="left:314.30px;width:24.70px;text-align:center">0</div><div class="c " style="left:340.00px;width:25.10px;text-align:center">0</div><div class="c " style="left:366.10px;width:18.30px;text-align:center">0</div><div class="c " style="left:385.40px;width:102.80px;text-align:center">2013-260T14:54:07.930</div><div class="c " style="left:489.20px;width:103.10px;text-align:center">2013-260T14:54:07.930</div><div class="c " style="left:593.30px;width:24.80px;text-align:center"></div><div class="c " style="left:619.10px;width:24.80px;text-align:center"></div><div class="c " style="left:644.90px;width:31.50px;text-align:center"></div><div class="c " style="left:677.40px;width:31.80px;text-align:center"></div><div class="c " style="left:710.20px;width:31.20px;text-align:center">189</div><div class="c vc" style="left:742.40px;width:11.30px;text-align:center">0</div><div class="c" style="left:763.4px;width:31.8px">Real-Time</div></div>
<div class="r" style="top:438.64px;height:10.39px"><div class="a" style="left:67.00px;top:0.5px;width:52.20px;height:9.39px;background:#ffff00"></div><div class="c " style="left:3.40px;width:62.60px;text-align:left">IDLE SP</div><div class="c " style="left:67.00px;width:51.20px;text-align:center">1000004</div><div class="c " style="left:120.10px;width:147.90px;text-align:left"></div><div class="c s" style="left:269.00px;width:44.30px;text-align:center;font-size:8.4px;line-height:11.6px;transform:scaleX(0.88);transform-origin:50% 50%">RTE</div><div class="c " style="left:314.30px;width:24.70px;text-align:center">2047</div><div class="c " style="left:340.00px;width:25.10px;text-align:center">127</div><div class="c " style="left:366.10px;width:18.30px;text-align:center">15</div><div class="c " style="left:385.40px;width:102.80px;text-align:center">2013-260T14:54:05.695</div><div class="c " style="left:489.20px;width:103.10px;text-align:center">2013-260T14:54:05.695</div><div class="c " style="left:593.30px;width:24.80px;text-align:center"></div><div class="c " style="left:619.10px;width:24.80px;text-align:center"></div><div class="c " style="left:644.90px;width:31.50px;text-align:center"></div><div class="c " style="left:677.40px;width:31.80px;text-align:center"></div><div class="c " style="left:710.20px;width:31.20px;text-align:center">0</div><div class="c vc" style="left:742.40px;width:11.30px;text-align:center">0</div><div class="c" style="left:763.4px;width:31.8px">Real-Time</div></div>
<div class="a" style="left:2px;top:64.5px;width:793.2px;height:1px;background:#9ca4bc"></div>
<div class="r" style="top:55.6px;height:10px">
<div class="ht" style="left:3.30px;width:63.50px">Mnemonic</div>
<div class="ht" style="left:67.80px;width:51.20px">SPID</div>
<div class="ht" style="left:120.00px;width:148.80px">Description</div>
<div class="ht" style="left:269.80px;width:44.30px">Domain</div>
<div class="ht" style="left:315.10px;width:24.70px">APID</div>
<div class="ht" style="left:340.80px;width:25.10px">PID</div>
<div class="ht" style="left:366.90px;width:18.30px">Cat</div>
<div class="ht" style="left:386.20px;width:102.80px">Generation Time</div>
<div class="ht" style="left:490.00px;width:103.10px">Reception Time</div>
<div class="ht" style="left:594.10px;width:24.80px">Type</div>
<div class="ht" style="left:619.90px;width:24.80px">SType</div>
<div class="ht" style="left:645.70px;width:31.50px">PI1</div>
<div class="ht" style="left:678.20px;width:31.80px">PI2</div>
<div class="ht" style="left:711.00px;width:31.20px">SSC</div>
<div class="ht" style="left:743.20px;width:11.30px">VC</div>
<div class="ht" style="left:757.6px;width:37px;text-align:left;clip-path:inset(-3px 0 -3px 0)">Data Partition</div>
</div>
<div class="a" style="left:66.00px;top:56px;width:1px;height:9px;background:#8795a8"></div><div class="a" style="left:67.00px;top:56px;width:1px;height:9px;background:#d0d8e2"></div>
<div class="a" style="left:118.20px;top:56px;width:1px;height:9px;background:#8795a8"></div><div class="a" style="left:119.20px;top:56px;width:1px;height:9px;background:#d0d8e2"></div>
<div class="a" style="left:268.00px;top:56px;width:1px;height:9px;background:#8795a8"></div><div class="a" style="left:269.00px;top:56px;width:1px;height:9px;background:#d0d8e2"></div>
<div class="a" style="left:313.30px;top:56px;width:1px;height:9px;background:#8795a8"></div><div class="a" style="left:314.30px;top:56px;width:1px;height:9px;background:#d0d8e2"></div>
<div class="a" style="left:339.00px;top:56px;width:1px;height:9px;background:#8795a8"></div><div class="a" style="left:340.00px;top:56px;width:1px;height:9px;background:#d0d8e2"></div>
<div class="a" style="left:365.10px;top:56px;width:1px;height:9px;background:#8795a8"></div><div class="a" style="left:366.10px;top:56px;width:1px;height:9px;background:#d0d8e2"></div>
<div class="a" style="left:384.40px;top:56px;width:1px;height:9px;background:#8795a8"></div><div class="a" style="left:385.40px;top:56px;width:1px;height:9px;background:#d0d8e2"></div>
<div class="a" style="left:488.20px;top:56px;width:1px;height:9px;background:#8795a8"></div><div class="a" style="left:489.20px;top:56px;width:1px;height:9px;background:#d0d8e2"></div>
<div class="a" style="left:592.30px;top:56px;width:1px;height:9px;background:#8795a8"></div><div class="a" style="left:593.30px;top:56px;width:1px;height:9px;background:#d0d8e2"></div>
<div class="a" style="left:618.10px;top:56px;width:1px;height:9px;background:#8795a8"></div><div class="a" style="left:619.10px;top:56px;width:1px;height:9px;background:#d0d8e2"></div>
<div class="a" style="left:643.90px;top:56px;width:1px;height:9px;background:#8795a8"></div><div class="a" style="left:644.90px;top:56px;width:1px;height:9px;background:#d0d8e2"></div>
<div class="a" style="left:676.40px;top:56px;width:1px;height:9px;background:#8795a8"></div><div class="a" style="left:677.40px;top:56px;width:1px;height:9px;background:#d0d8e2"></div>
<div class="a" style="left:709.20px;top:56px;width:1px;height:9px;background:#8795a8"></div><div class="a" style="left:710.20px;top:56px;width:1px;height:9px;background:#d0d8e2"></div>
<div class="a" style="left:741.40px;top:56px;width:1px;height:9px;background:#8795a8"></div><div class="a" style="left:742.40px;top:56px;width:1px;height:9px;background:#d0d8e2"></div>
<div class="a" style="left:753.70px;top:56px;width:1px;height:9px;background:#8795a8"></div><div class="a" style="left:754.70px;top:56px;width:1px;height:9px;background:#d0d8e2"></div>
<div class="a" style="left:2px;top:449.2px;width:794px;height:10.3px;background:#ececea"></div>
<div class="a" style="left:2px;top:449.2px;width:794px;height:0.9px;background:#a2bcdc"></div>
<div class="a" style="left:2px;top:459px;width:794px;height:0.7px;background:#b6c4d4"></div>
<div class="a" style="left:2.5px;top:450px;width:9.5px;height:9px;background:#f6f6f4"></div>
<svg class="a" style="left:4.5px;top:451.8px" width="6" height="6" viewBox="0 0 6 6"><path d="M1,3 L4.6,0 L4.6,6 Z" fill="#111"/></svg>
<div class="a" style="left:12px;top:450.1px;width:653px;height:8.9px;border-radius:1.5px;background:linear-gradient(#e4edf8,#b7cdea);border:0.8px solid #93b1d8"></div>
<div class="a" style="left:337.8px;top:451.8px;width:3.2px;height:5.5px;background:#8aa6d0"></div>
<div class="a" style="left:784.5px;top:450px;width:10.7px;height:9px;background:#f6f6f4;border-left:0.8px solid #d6d6d6"></div>
<svg class="a" style="left:787.5px;top:451.8px" width="6" height="6" viewBox="0 0 6 6"><path d="M5,3 L1.4,0 L1.4,6 Z" fill="#111"/></svg>
<div class="a" style="left:796.9px;top:55.2px;width:9px;height:16px;border:1px solid #dacaa2;border-radius:3px;background:#fcfaf5"></div>
<div class="a" style="left:800.6px;top:63.6px;width:2px;height:1.2px;background:#9aa4d0"></div>
<div class="a" style="left:797.3px;top:74.4px;width:9px;height:367px;border:1px solid #d6c49a;border-radius:3px;background:#fff"></div>
<div class="a" style="left:798.4px;top:83.6px;width:5px;height:348px;background:linear-gradient(90deg,#b4cdf0,#92b4e6)"></div>
<div class="a" style="left:796.9px;top:443.5px;width:9px;height:15px;border:1px solid #dacaa2;border-radius:3px;background:#fcfaf5"></div>
<div class="a" style="left:800.6px;top:450.6px;width:2px;height:1.2px;background:#9aa4d0"></div>
<div class="fld" style="left:61.3px;top:462.2px;width:105px;height:14px;background:#faf7f0;border-color:#ddd0b2"></div>
<div class="fld" style="left:199.3px;top:462.5px;width:84.2px;height:13.8px"></div>
<div class="chk" style="left:289px;top:466px"></div><div class="ex" style="left:302px;top:467.3px"></div>
<div class="fld" style="left:361px;top:462.5px;width:63.4px;height:13.8px"></div>
<div class="chk" style="left:430px;top:466px"></div><div class="ex" style="left:443px;top:467.3px"></div>
<div class="fld" style="left:487.3px;top:462.5px;width:83.9px;height:13.8px"></div>
<div class="chk" style="left:577.2px;top:466px"></div><div class="ex" style="left:590px;top:467.3px"></div>
<div class="a" style="left:738.9px;top:461.1px;width:25.3px;height:15.4px;border:1px solid #e2d6b8;border-radius:3px;background:#fbf9f4"></div>
<div class="a" style="left:768.9px;top:461.1px;width:31.4px;height:15.4px;border:1px solid #e2d6b8;border-radius:3px;background:#fbf9f4"></div>
<div class="fld" style="left:61.3px;top:481.5px;width:84.4px;height:14px"></div>
<div class="chk" style="left:151.4px;top:484.5px"></div><div class="ex" style="left:164.5px;top:485.8px"></div>
<div class="fld" style="left:199.3px;top:481.5px;width:84.2px;height:14px"></div>
<div class="chk" style="left:289px;top:484.7px"></div><div class="ex" style="left:302px;top:486px"></div>
<div class="a" style="left:62px;top:499.3px;width:84px;height:1px;background:#eee5d2"></div>
<div class="a" style="left:200px;top:499.3px;width:84px;height:1px;background:#eee5d2"></div>
<div class="fld" style="left:360.6px;top:480.3px;width:85px;height:18.5px;border-color:#d8c8a0"></div><div class="a" style="left:428.40px;top:482.3px;width:15.3px;height:15.3px;border:1px solid #d6c9aa;border-radius:2.5px;background:linear-gradient(#fdfcf8,#eee8d8)"></div><svg class="a" style="left:432.00px;top:487.2px" width="8" height="6" viewBox="0 0 8 6"><path d="M1,1 L4,4.3 L7,1" fill="none" stroke="#1a1a1a" stroke-width="1.3"/></svg>
<div class="fld" style="left:486.9px;top:480.3px;width:106.1px;height:18.5px;border-color:#d8c8a0"></div><div class="a" style="left:575.80px;top:482.3px;width:15.3px;height:15.3px;border:1px solid #d6c9aa;border-radius:2.5px;background:linear-gradient(#fdfcf8,#eee8d8)"></div><svg class="a" style="left:579.40px;top:487.2px" width="8" height="6" viewBox="0 0 8 6"><path d="M1,1 L4,4.3 L7,1" fill="none" stroke="#1a1a1a" stroke-width="1.3"/></svg>
<div class="t" style="left:15.35px;top:6.80px;font-size:8.3px;line-height:12px;color:#000;transform:scaleX(1.0284);">TM Packets: RTE</div>
<div class="t" style="left:109.85px;top:6.80px;font-size:8.3px;line-height:12px;color:#000;transform:scaleX(1.0359);">TM Packets History Report</div>
<div class="t" style="left:304.35px;top:42.30px;font-size:8.4px;line-height:12px;color:#111;transform:scaleX(0.9595);">2013-260T14:54:17.998</div>
<div class="t" style="left:398.85px;top:42.50px;font-size:8.4px;line-height:12px;color:#111;transform:scaleX(0.9783);">~</div>
<div class="t" style="left:410.85px;top:42.30px;font-size:8.4px;line-height:12px;color:#111;transform:scaleX(0.9673);">2013-260T14:54:05.695</div>
<div class="t" style="left:513.65px;top:42.00px;font-size:8.4px;line-height:12px;color:#c9c9c9;transform:scaleX(0.9408);">PGT</div>
<div class="t" style="left:545.65px;top:42.00px;font-size:8.4px;line-height:12px;color:#111;transform:scaleX(0.9403);">BRIEF</div>
<div class="t" style="left:591.65px;top:42.00px;font-size:8.4px;line-height:12px;color:#111;transform:scaleX(0.9266);">FILTER DISABLED</div>
<div class="t" style="left:685.35px;top:42.00px;font-size:8.4px;line-height:12px;color:#111;transform:scaleX(0.9332);">RTE</div>
<div class="t" style="left:723.85px;top:42.00px;font-size:8.4px;line-height:12px;color:#111;transform:scaleX(0.9836);">Real-Time</div>
<div class="t" style="left:778.35px;top:42.00px;font-size:8.4px;line-height:12px;color:#111;transform:scaleX(0.8805);">LIVE</div>
<div class="t" style="left:3.65px;top:463.20px;font-size:8.4px;line-height:12px;color:#151515;transform:scaleX(0.9477);">Data Partition:</div>
<div class="t" style="left:64.15px;top:463.20px;font-size:8.4px;line-height:12px;color:#d6c8a6;transform:scaleX(0.9836);">Real-Time</div>
<div class="t" style="left:172.75px;top:463.20px;font-size:8.4px;line-height:12px;color:#151515;transform:scaleX(0.9178);">Type:</div>
<div class="t" style="left:317.25px;top:463.20px;font-size:8.4px;line-height:12px;color:#151515;transform:scaleX(0.9453);">Sub-Type:</div>
<div class="t" style="left:459.65px;top:463.20px;font-size:8.4px;line-height:12px;color:#151515;transform:scaleX(0.8823);">APID:</div>
<div class="t" style="left:741.65px;top:462.80px;font-size:8.4px;line-height:12px;color:#d0c3a2;transform:scaleX(0.9593);">Apply</div>
<div class="t" style="left:771.75px;top:462.80px;font-size:8.4px;line-height:12px;color:#d0c3a2;transform:scaleX(0.9907);">Default</div>
<div class="t" style="left:39.75px;top:481.90px;font-size:8.4px;line-height:12px;color:#151515;transform:scaleX(0.9526);">PI1:</div>
<div class="t" style="left:177.75px;top:481.90px;font-size:8.4px;line-height:12px;color:#151515;transform:scaleX(0.9258);">PI2:</div>
<div class="t" style="left:330.15px;top:481.90px;font-size:8.4px;line-height:12px;color:#151515;transform:scaleX(0.9101);">G/S ID:</div>
<div class="t" style="left:361.65px;top:483.00px;font-size:8.4px;line-height:12px;color:#111;transform:scaleX(0.9342);">All</div>
<div class="t" style="left:448.65px;top:481.90px;font-size:8.4px;line-height:12px;color:#151515;transform:scaleX(0.9463);">DU Type:</div>
<div class="t" style="left:488.15px;top:483.00px;font-size:8.4px;line-height:12px;color:#111;transform:scaleX(0.9772);">All</div>
</body></html>
